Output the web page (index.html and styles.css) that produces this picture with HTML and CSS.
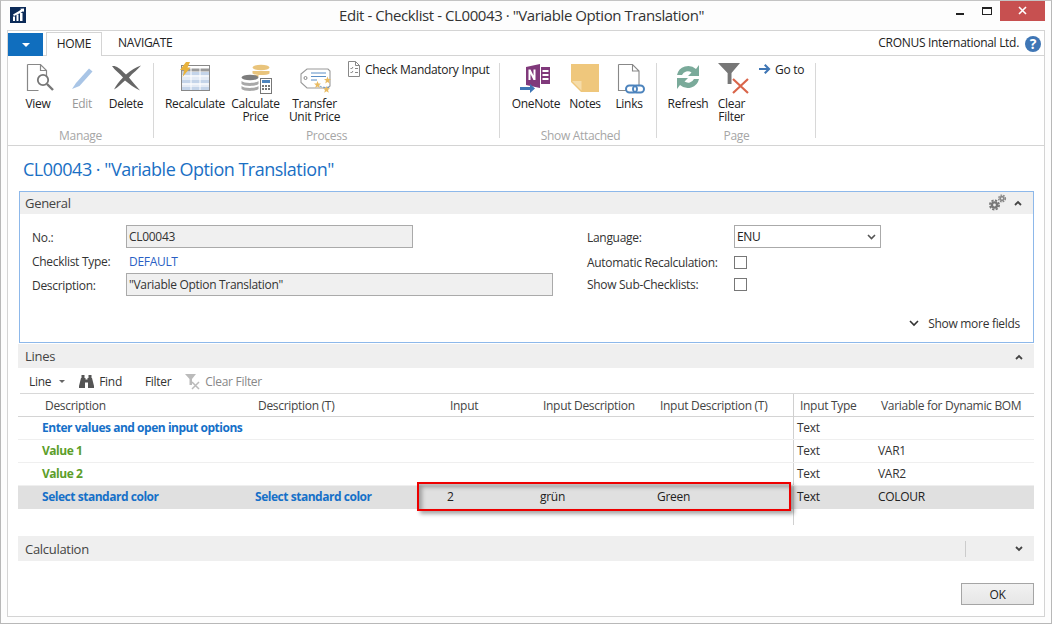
FILE: index.html
```html
<!DOCTYPE html>
<html lang="en">
<head>
<meta charset="utf-8">
<title>Edit - Checklist - CL00043</title>
<link rel="stylesheet" href="styles.css">
</head>
<body>
<div class="window">
  <header class="titlebar">
    <svg class="app-logo" viewBox="0 0 16 16"><rect width="16" height="16" fill="#0c2b58"/><path d="M3 14V9.500h2V14zM6.500 14V7.500h2V14zM10 14V6h2.500v8z" fill="#fff"/><path d="M3 7.500 9 4l2-1.600-.9-.6L14 1.500V5l-1-.8L10.500 6 4 9z" fill="#fff"/></svg>
    <div class="title">Edit - Checklist - CL00043 · "Variable Option Translation"</div>
    <div class="controls">
      <span class="min"></span>
      <span class="max"></span>
      <span class="close"><svg viewBox="0 0 9 9" width="9" height="9"><path d="M1 1l7 7M8 1L1 8" stroke="#fff" stroke-width="1.600"/></svg></span>
    </div>
  </header>
  <div class="frame">
    <nav class="tabs">
      <button class="app-btn"><span class="tri"></span></button>
      <span class="tab active">HOME</span>
      <span class="tab">NAVIGATE</span>
      <span class="company">CRONUS International Ltd.</span>
      <span class="help">?</span>
    </nav>
    <section class="ribbon">
      <div class="group g-manage">
        <div class="btns">
          <div class="big w44">
            <svg class="ico" viewBox="22 62 32 32"><path d="M27.500 64.500h13l6 6v9M27.500 64.500v26h11M40.500 64.500v6h6" fill="none" stroke="#888" stroke-width="1.200"/><circle cx="43" cy="80" r="5.200" fill="#fff" stroke="#777" stroke-width="1.800"/><path d="M47 84l6 6" stroke="#777" stroke-width="2.400"/></svg>
            <span>View</span>
          </div>
          <div class="big w44 dim">
            <svg class="ico" viewBox="66 62 32 32"><path d="M76 83l13-14.500 3.500 3L79.500 86l-7.500 3z" fill="#a9c5e6"/></svg>
            <span>Edit</span>
          </div>
          <div class="big w44">
            <svg class="ico" viewBox="110 62 32 32"><path d="M112 66c4-.5 7 1.500 14 8.500 5-4 10-7.500 15-9-3 4-8 7-12 12 3 4 7 8 11 13-6-2.500-11-7-15-10-4 3-7 7-11 9 2-4 5-8 9-12-3-4-8-7-11-11.500z" fill="#666"/></svg>
            <span>Delete</span>
          </div>
        </div>
        <div class="g-label">Manage</div>
      </div>
      <div class="group g-process">
        <div class="btns">
          <div class="big w60">
            <svg class="ico" viewBox="179 62 32 32"><rect x="181.500" y="65.500" width="28" height="25" fill="#fff" stroke="#888"/><path d="M182 70h27" stroke="#999" stroke-width="3"/><path d="M182 72h27v3.500h-27zM182 80h27v3.500h-27z" fill="#c4d4e9"/><path d="M182 76h27v4h-27zM182 84h27v6h-27z" fill="#e4ebf5"/><path d="M182 87h27v3h-27z" fill="#c4d4e9"/><path d="M191 66v24M200 66v24M182 76h27M182 84h27" stroke="#fff"/><path d="M186 62h4l-2.500 5.500h3L182.500 77l1.800-7H180z" fill="#e8b23c"/></svg>
            <span>Recalculate</span>
          </div>
          <div class="big w61">
            <svg class="ico" viewBox="240 62 32 32"><ellipse cx="261" cy="67.500" rx="8.500" ry="2.800" fill="#e9c47c"/><path d="M252.500 71h17v2.500c-2 2-15 2-17 0z" fill="#e9c47c"/><path d="M252.500 75h6v2h-6z" fill="#e9c47c"/><ellipse cx="250" cy="77.500" rx="8.500" ry="2.800" fill="#7d7d7d"/><path d="M241.500 81c2 2.500 15 2.500 17 0v3c-2 2.500-15 2.500-17 0zM241.500 86c2 2.500 15 2.500 17 0v3c-2 2.500-15 2.500-17 0z" fill="#a8a8a8"/><rect x="260.500" y="78.500" width="11" height="15" fill="#fff" stroke="#777"/><path d="M262 80h8v3h-8z" fill="#4d84bd"/><path d="M262 85h2v2h-2zM265 85h2v2h-2zM268 85h2v2h-2zM262 88h2v2h-2zM265 88h2v2h-2zM268 88h2v2h-2z" fill="#777"/></svg>
            <span>Calculate<br>Price</span>
          </div>
          <div class="big w57">
            <svg class="ico" viewBox="299 62 32 32"><path d="M301 74l6-5h21l2 2v15l-2 2h-21l-6-5.500z" fill="#fff" stroke="#999" stroke-width="1.100"/><circle cx="305.500" cy="78" r="1.500" fill="none" stroke="#888"/><path d="M311 73h15M311 76.500h15M311 80h6" stroke="#5a8ec6"/><path d="M317 84a10 7 0 0 0 12 3" fill="none" stroke="#5a8ec6" stroke-dasharray="2 1.500"/><path d="M327.500 76.500l1 2.500h2.500l-2 1.800.8 2.700-2.300-1.500-2.300 1.500.8-2.700-2-1.800h2.500zM317.500 81l1 2.500h2.500l-2 1.800.8 2.700-2.300-1.500-2.300 1.500.8-2.700-2-1.800h2.500zM326.500 86l1 2.300h2.500l-2 1.700.8 2.700-2.300-1.500-2.300 1.500.8-2.700-2-1.700h2.500z" fill="#e9bb62"/></svg>
            <span>Transfer<br>Unit Price</span>
          </div>
          <div class="small s-check">
            <svg width="12" height="16" viewBox="0 0 12 16"><path d="M.5.500h7l4 4v11H.5zM7.500.500v4h4" fill="#fff" stroke="#888"/><path d="M2.500 7l1 1 1.500-2M2.500 11l1 1 1.500-2" fill="none" stroke="#666" stroke-width=".8"/><path d="M7 7.500h3M7 11.500h3" stroke="#888"/></svg>
            <span>Check Mandatory Input</span>
          </div>
        </div>
        <div class="g-label">Process</div>
      </div>
      <div class="group g-attached">
        <div class="btns">
          <div class="big w50">
            <svg class="ico" viewBox="520 62 32 32"><path d="M526 67l14-3v24l-14-3z" fill="#80397b"/><path d="M541 67h9v17h-9z" fill="#80397b"/><path d="M542.500 70h6v2h-6zM542.500 74h6v2h-6zM542.500 78h6v2h-6z" fill="#fff"/><path d="M528.500 80V69.500h2l3 6v-6h2V80h-2l-3-6v6z" fill="#fff"/><path d="M520 87h10v-3l5 4.500-5 4.500v-3h-10z" fill="#3f76b5"/></svg>
            <span>OneNote</span>
          </div>
          <div class="big w48">
            <svg class="ico" viewBox="569 62 32 32"><path d="M571 64h28v28h-18l-10-10z" fill="#efc77c"/><path d="M572 81h9.500v9.500z" fill="#f5dca9"/></svg>
            <span>Notes</span>
          </div>
          <div class="big w40">
            <svg class="ico" viewBox="613 62 32 32"><path d="M618.500 64.500h14l6.500 6.500v14M618.500 64.500v26h8M632.500 64.500v6.500h6.500" fill="none" stroke="#888" stroke-width="1.100"/><rect x="626" y="85.500" width="11" height="7" rx="3.500" fill="#fff" stroke="#4d84bd" stroke-width="2"/><rect x="633" y="85.500" width="11" height="7" rx="3.500" fill="none" stroke="#4d84bd" stroke-width="2"/></svg>
            <span>Links</span>
          </div>
        </div>
        <div class="g-label">Show Attached</div>
      </div>
      <div class="group g-page">
        <div class="btns">
          <div class="big w44">
            <svg class="ico" viewBox="672 62 32 32"><path d="M677 75a11.500 11.500 0 0 1 19-6l3-4v11h-11l3.500-3.500a6.500 6.500 0 0 0-9.500 2.500zM699 79a11.500 11.500 0 0 1-19 6l-3 4V78h11l-3.500 3.500a6.500 6.500 0 0 0 9.500-2.500z" fill="#7aaa9a"/></svg>
            <span>Refresh</span>
          </div>
          <div class="big w43">
            <svg class="ico" viewBox="715 62 32 32"><path d="M717 63h22l-8.500 10v11h-4V73z" fill="#777"/><path d="M726.500 73v11" stroke="#ccc"/><path d="M732 79l15 14M747 79l-15 14" stroke="#d9654a" stroke-width="2.200"/></svg>
            <span>Clear<br>Filter</span>
          </div>
          <div class="small s-goto">
            <svg width="12" height="10" viewBox="0 0 12 10"><path d="M0 4h7.500L5 1.500 6.500 0 11.500 5l-5 5L5 8.500 7.500 6H0z" fill="#3f76b5"/></svg>
            <span>Go to</span>
          </div>
        </div>
        <div class="g-label">Page</div>
      </div>
    </section>
    <main class="content">
      <h1 class="page-title">CL00043 · "Variable Option Translation"</h1>

      <section class="panel">
        <div class="fasthead focus-head">
          <span>General</span>
          <svg class="gear" width="18" height="17" viewBox="0 0 18 17"><circle cx="5.500" cy="11" r="3.800" fill="#777"/><circle cx="5.500" cy="11" r="4.600" fill="none" stroke="#777" stroke-width="1.800" stroke-dasharray="2.200 1.400"/><circle cx="5.500" cy="11" r="1.400" fill="#efefef"/><circle cx="13" cy="4.500" r="2.700" fill="#888"/><circle cx="13" cy="4.500" r="3.400" fill="none" stroke="#888" stroke-width="1.400" stroke-dasharray="1.700 1.100"/><circle cx="13" cy="4.500" r="1" fill="#efefef"/></svg>
          <svg class="chev up" width="8" height="6" viewBox="0 0 8 6"><path d="M1 5l3-3 3 3" fill="none" stroke="#444" stroke-width="1.800"/></svg>
        </div>
        <div class="form">
          <div class="fcol left">
            <div class="frow r1"><label>No.:</label><div class="field w287">CL00043</div></div>
            <div class="frow r2"><label>Checklist Type:</label><a class="flink">DEFAULT</a></div>
            <div class="frow r3"><label>Description:</label><div class="field w427">"Variable Option Translation"</div></div>
          </div>
          <div class="fcol right">
            <div class="frow r1"><label class="lw">Language:</label><div class="select">ENU<svg width="9" height="6" viewBox="0 0 9 6"><path d="M1 1l3.500 3.500L8 1" fill="none" stroke="#555" stroke-width="1.600"/></svg></div></div>
            <div class="frow r2b"><label class="lw">Automatic Recalculation:</label><span class="check"></span></div>
            <div class="frow r3b"><label class="lw">Show Sub-Checklists:</label><span class="check"></span></div>
          </div>
        </div>
        <div class="more"><svg width="10" height="7" viewBox="0 0 10 7"><path d="M1 1l4 4 4-4" fill="none" stroke="#333" stroke-width="1.600"/></svg><span>Show more fields</span></div>
      </section>

      <section class="lines">
        <div class="fasthead">
          <span>Lines</span>
          <svg class="chev up" width="8" height="6" viewBox="0 0 8 6"><path d="M1 5l3-3 3 3" fill="none" stroke="#444" stroke-width="1.800"/></svg>
        </div>
        <div class="toolbar">
          <span class="t-line">Line</span><span class="caret"></span>
          <svg class="binoc" width="15" height="13" viewBox="0 0 15 13"><path d="M2.500 0h3v3h-3zM9.500 0h3v3h-3zM2 3h4.500v1.500h2V3H13l2 8v2H9V7.500H6V13H0v-2z" fill="#555"/></svg>
          <span class="t-find">Find</span>
          <span class="t-filter">Filter</span>
          <svg class="fclear" width="16" height="16" viewBox="0 0 16 16"><path d="M0 0h11L7 5v6H4.500V5z" fill="#bbb"/><path d="M7 8l7 7M14 8l-7 7" stroke="#bbb" stroke-width="1.500"/></svg>
          <span class="t-clear">Clear Filter</span>
        </div>
        <div class="grid">
          <div class="row head">
            <span></span><span>Description</span><span>Description (T)</span><span>Input</span><span>Input Description</span><span>Input Description (T)</span><span class="sep">Input Type</span><span>Variable for Dynamic BOM</span>
          </div>
          <div class="row">
            <span></span><span class="b blue">Enter values and open input options</span><span></span><span></span><span></span><span></span><span class="sep">Text</span><span></span>
          </div>
          <div class="row">
            <span></span><span class="b green">Value 1</span><span></span><span></span><span></span><span></span><span class="sep">Text</span><span>VAR1</span>
          </div>
          <div class="row">
            <span></span><span class="b green">Value 2</span><span></span><span></span><span></span><span></span><span class="sep">Text</span><span>VAR2</span>
          </div>
          <div class="row selected">
            <span></span><span class="b blue">Select standard color</span><span class="b blue">Select standard color</span><span>2</span><span>grün</span><span>Green</span><span class="sep">Text</span><span>COLOUR</span>
          </div>
          <div class="row filler">
            <span></span><span></span><span></span><span></span><span></span><span></span><span class="sep"></span><span></span>
          </div>
          <div class="highlight"></div>
        </div>
      </section>

      <section class="calc">
        <span>Calculation</span>
        <i class="calc-sep"></i>
        <svg class="chev" width="8" height="6" viewBox="0 0 8 6"><path d="M1 1l3 3 3-3" fill="none" stroke="#444" stroke-width="1.800"/></svg>
      </section>

      <div class="footer"><button class="ok">OK</button></div>
    </main>
  </div>
</div>
</body>
</html>
```
FILE: styles.css
```css
* { box-sizing: border-box; }
html, body { margin: 0; padding: 0; background: #fff; }
body {
  font-family: "Open Sans", "Noto Sans", sans-serif;
  font-size: 12px;
  letter-spacing: -0.3px;
  color: #333;
  line-height: 13px;
}
.window {
  width: 1052px;
  height: 624px;
  border: 1px solid #b8b8b8;
  border-top-color: #c4c4c4;
  background: #fdfdfd;
  display: flex;
  flex-direction: column;
  overflow: hidden;
  position: relative;
}
.titlebar {
  height: 29px;
  flex: none;
  position: relative;
  display: flex;
  align-items: flex-start;
  justify-content: center;
}
.app-logo { position: absolute; left: 9px; top: 6px; width: 16px; height: 16px; }
.title { font-size: 15px; letter-spacing: -0.42px; line-height: 20px; margin-top: 4px; margin-right: 9px; color: #333; }
.controls { position: absolute; right: 6px; top: -1px; display: flex; align-items: flex-start; }
.min { width: 8px; height: 2px; background: #222; margin-top: 13px; margin-right: 18px; }
.max { width: 10px; height: 8px; border: 1px solid #222; border-top-width: 2px; margin-top: 7px; margin-right: 8px; }
.close { width: 45px; height: 21px; background: #c75050; display: flex; align-items: center; justify-content: center; }

.frame {
  flex: 1;
  margin: 0 6px 6px;
  border: 1px solid #d4d4d4;
  background: #fff;
  display: flex;
  flex-direction: column;
  min-height: 0;
}
.tabs {
  height: 25px;
  flex: none;
  border-bottom: 1px solid #d4d4d4;
  display: flex;
  align-items: flex-end;
  position: relative;
}
.app-btn { width: 35px; height: 23px; margin: 0 0 -1px; border: 0; padding: 0; background: #106ebe; display: flex; align-items: center; justify-content: center; }
.tri { width: 0; height: 0; border: 4px solid transparent; border-top: 4px solid #fff; border-bottom: 0; }
.tab { height: 23px; line-height: 22px; padding: 0 11px; text-align: center; color: #222; }
.tab.active { width: 56px; margin-left: 3px; border: 1px solid #d4d4d4; border-bottom: 0; background: #fff; margin-bottom: -1px; height: 24px; padding: 0; }
.tab:not(.active) { padding-left: 16px; }
.company { margin-left: auto; height: 23px; line-height: 22px; color: #222; margin-right: 6px; }
.help { width: 16px; height: 16px; border-radius: 50%; background: #3f76b5; color: #fff; font-weight: 700; font-size: 14px; line-height: 16px; text-align: center; margin: 0 3px 3px 0; }

.ribbon { height: 90px; flex: none; border-bottom: 1px solid #d4d4d4; display: flex; padding-top: 7px; }
.group { display: flex; flex-direction: column; justify-content: space-between; height: 75px; border-right: 1px solid #d8d8d8; }
.g-manage { width: 146px; }
.g-process { width: 346px; }
.g-attached { width: 157px; }
.g-page { width: 159px; }
.g-manage .btns { padding-left: 8px; }
.g-process .btns { padding-left: 11px; }
.g-attached .btns { padding-left: 11px; }
.g-page .btns { padding-left: 9px; }
.btns { display: flex; align-items: flex-start; }
.big { display: flex; flex-direction: column; align-items: center; text-align: center; flex: none; color: #222; }
.big.dim { color: #999; }
.w40 { width: 40px; } .w43 { width: 43px; } .w44 { width: 44px; } .w48 { width: 48px; } .w50 { width: 50px; }
.w57 { width: 57px; } .w60 { width: 60px; } .w61 { width: 61px; }
.ico { width: 32px; height: 32px; margin-bottom: 3px; overflow: visible; flex: none; margin-top: -1px; }
.small { display: flex; align-items: center; gap: 4px; color: #222; height: 16px; margin-top: -2px; white-space: nowrap; }
.s-check { margin-left: 5px; gap: 5px; }
.s-goto { margin-left: 6px; gap: 4px; }
.g-label { text-align: center; color: #a6a6a6; height: 13px; margin-bottom: -4px; }
.g-attached .g-label { padding-left: 5px; }
.g-page .g-label { padding-left: 1px; }

.content { flex: 1; padding: 0 10px; display: flex; flex-direction: column; min-height: 0; }
.page-title { font-size: 18px; font-weight: 400; letter-spacing: -0.5px; color: #1a6fc4; margin: 0; height: 45px; line-height: 46px; padding-left: 5px; flex: none; }

.panel { height: 152px; margin-left: 1px; border: 1px solid #8db8ea; position: relative; flex: none; }
.fasthead { height: 24px; padding-top: 1px; background: #efefef; display: flex; align-items: center; padding-left: 7px; font-size: 13px; letter-spacing: -0.3px; color: #444; }
.focus-head { height: 22px; padding: 0 0 0 5px; }
.gear { margin-left: auto; margin-right: 7px; margin-top: -1px; }
.chev.up { margin-right: 11px; }
.fasthead > .chev:only-of-type { margin-left: auto; }
.fasthead .gear + .chev { margin-left: 0; }
.form { display: grid; grid-template-columns: 555px 1fr; padding: 11px 0 0 12px; }
.fcol { display: flex; flex-direction: column; }
.frow { display: flex; align-items: center; }
.frow label { width: 94px; flex: none; color: #333; }
.frow label.lw { width: 147px; }
.r1 { height: 23px; }
.r2 { height: 25px; }
.r3 { height: 23px; }
.r1 label, .r3 label { padding-top: 1px; }
.r2 label, .r2 .flink { padding-top: 2px; }
.r2b { height: 13px; margin-top: 8px; }
.r3b { height: 13px; margin-top: 9px; }
.field { height: 23px; background: #f0f0f0; border: 1px solid #aaa; padding: 0 2px; line-height: 22px; }
.w287 { width: 287px; }
.w427 { width: 427px; }
.flink { color: #2a5fc4; padding-left: 3px; }
.select { width: 147px; height: 23px; border: 1px solid #aaa; padding-left: 2px; padding-top: 0; line-height: 22px; display: flex; align-items: center; justify-content: space-between; padding-right: 4px; color: #222; }
.check { width: 13px; height: 13px; border: 1px solid #777; background: #fff; }
.more { position: absolute; right: 13px; bottom: 12px; display: flex; align-items: center; gap: 9px; color: #333; }

.lines { margin-top: 1px; flex: none; }
.toolbar { height: 26px; padding-top: 1px; border-bottom: 1px solid #d8d8d8; margin-left: 2px; display: flex; align-items: center; padding-left: 9px; color: #333; }
.caret { width: 0; height: 0; border: 3px solid transparent; border-top: 3px solid #666; border-bottom: 0; margin-left: 8px; }
.binoc { margin-left: 14px; }
.t-find { margin-left: 5px; }
.t-filter { margin-left: 23px; }
.fclear { margin-left: 14px; margin-top: 2px; }
.t-clear { margin-left: 4px; color: #888; }
.grid { position: relative; }
.row { display: grid; grid-template-columns: 24px 213px 192px 93px 117px 136px 85px 1fr; height: 23px; border-bottom: 1px solid #efefef; }
.row > span { line-height: 22px; white-space: nowrap; }
.head { border-bottom-color: #d4d4d4; color: #444; }
.head > span { padding-left: 3px; line-height: 24px; }
.row > .sep { border-left: 1px solid #d0d0d0; padding-left: 3px; }
.head > .sep { padding-left: 6px; }
.b { font-weight: 700; letter-spacing: -0.47px; }
.blue { color: #1670c8; }
.green { color: #5c9e2a; }
.selected { background: #e0e0e0; border-bottom: 0; height: 23px; color: #222; }
.filler { height: 16px; border: 0; }
.highlight { position: absolute; left: 399px; top: 88px; width: 374px; height: 29px; border: 2px solid #ee0000; box-shadow: 3px 3px 4px rgba(0,0,0,.35), inset 3px 3px 4px rgba(0,0,0,.3); }

.calc { margin-top: 11px; height: 25px; padding-top: 1px; background: #efefef; display: flex; align-items: center; padding-left: 7px; font-size: 13px; letter-spacing: -0.3px; color: #444; flex: none; }
.calc-sep { width: 1px; height: 16px; background: #ccc; margin-left: auto; margin-right: 49px; }
.calc .chev { margin-right: 11px; }
.footer { display: flex; justify-content: flex-end; padding-top: 22px; }
.ok { width: 73px; height: 22px; border: 1px solid #a5a5a5; background: linear-gradient(#f2f2f2, #e6e6e6); font: inherit; letter-spacing: inherit; color: #222; padding: 0; }
```
